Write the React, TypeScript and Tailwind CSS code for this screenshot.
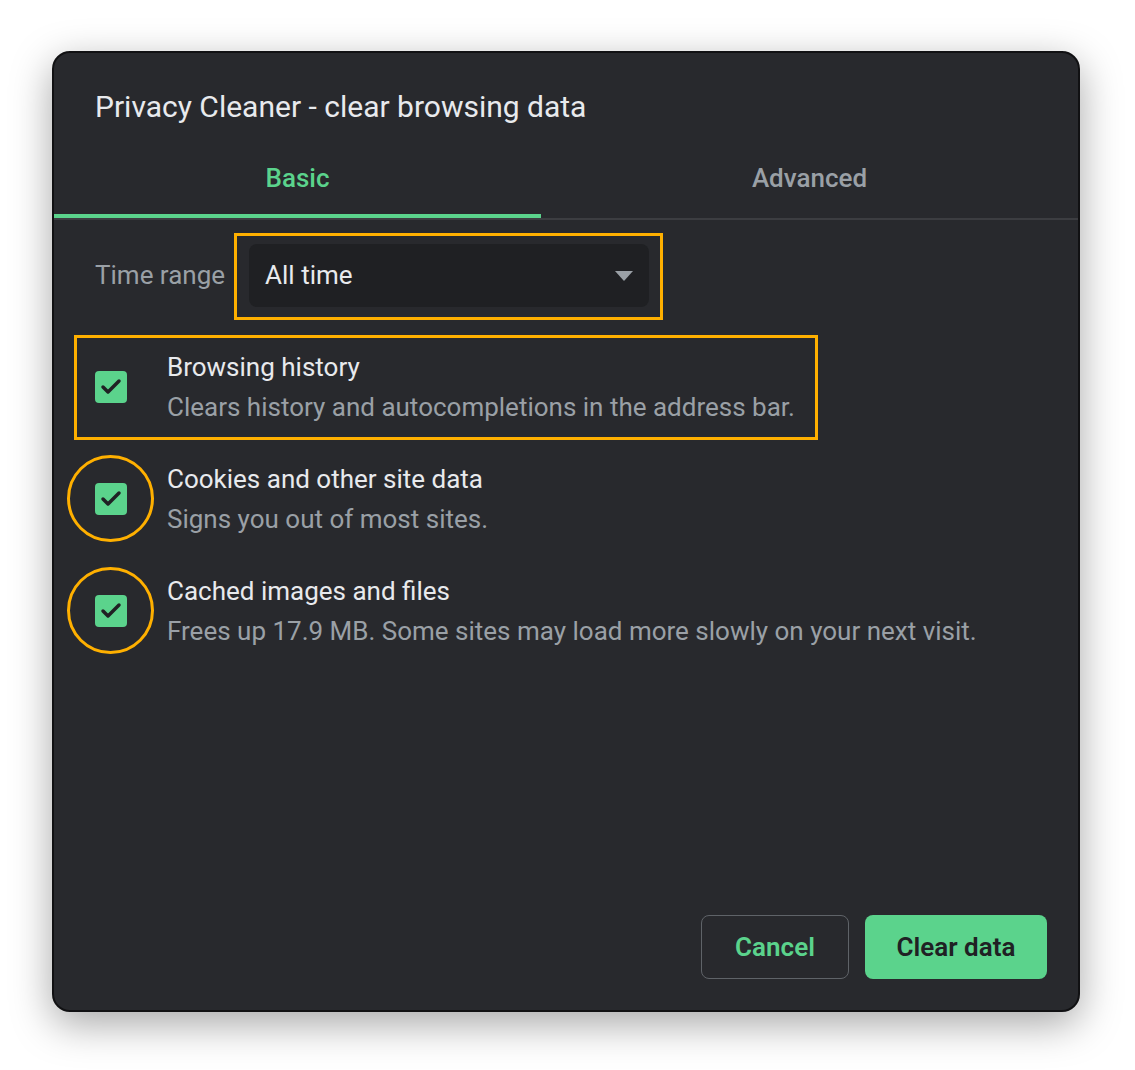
import { Check } from 'lucide-react';

const font = { fontFamily: 'Roboto, "Noto Sans", sans-serif' };

const CheckBox = ({ ring }: { ring?: boolean }) => (
  <div className="relative h-8 w-8 shrink-0">
    <div className="flex h-8 w-8 items-center justify-center rounded-[4px] bg-[#5bd38c]">
      <Check size={24} strokeWidth={3.5} color="#202124" />
    </div>
    {ring && (
      <div className="absolute -left-[28px] -top-[28px] h-[87px] w-[87px] rounded-full border-[3px] border-[#ffb000]" />
    )}
  </div>
);

const Row = ({ title, desc, ring }: { title: string; desc: string; ring?: boolean }) => (
  <div className="flex items-center gap-10">
    <CheckBox ring={ring} />
    <div className="flex flex-col text-[26px] leading-[40px]">
      <span className="text-[#e8eaed]">{title}</span>
      <span className="text-[#9aa0a6]">{desc}</span>
    </div>
  </div>
);

export default function App() {
  return (
    <div className="h-[1070px] w-[1135px] bg-white pl-[52px] pt-[51px]" style={font}>
      <div className="flex h-[961px] w-[1028px] flex-col rounded-[18px] border-2 border-[#111113] bg-[#28292d] shadow-[0_12px_40px_rgba(0,0,0,0.35)]">
        <h1 className="pl-[41px] pt-[36px] text-[30px] font-normal leading-[36px] text-[#e8eaed]">
          Privacy Cleaner - clear browsing data
        </h1>

        <div className="flex border-b-2 border-[#3c3d41]">
          <div className="w-[487px] border-b-4 border-[#5bd38c] pb-[21px] pt-[38px] text-center text-[26px] font-medium leading-[30px] text-[#5bd38c]">
            Basic
          </div>
          <div className="flex-1 pb-[21px] pt-[38px] text-center text-[26px] font-medium leading-[30px] text-[#9aa0a6]">
            Advanced
          </div>
        </div>

        <div className="flex flex-1 flex-col pl-[41px] pr-[31px] pb-[31px]">
          <div className="mt-6 flex items-center gap-6">
            <span className="text-[26px] text-[#9aa0a6]">Time range</span>
            <div className="relative">
              <div className="flex h-[63px] w-[400px] items-center justify-between rounded-[8px] bg-[#1f2023] pl-4 pr-4">
                <span className="text-[26px] text-[#e8eaed]">All time</span>
                <svg width="18" height="10" viewBox="0 0 18 10">
                  <path d="M0 0 L18 0 L9 10 Z" fill="#9aa0a6" />
                </svg>
              </div>
              <div className="absolute -bottom-[13px] -left-[15px] -right-[14px] -top-[11px] border-[3px] border-[#ffb000]" />
            </div>
          </div>

          <div className="mt-10 flex flex-col gap-8">
            <div className="relative">
              <Row
                title="Browsing history"
                desc="Clears history and autocompletions in the address bar."
              />
              <div className="absolute -left-[21px] -top-[12px] h-[105px] w-[744px] border-[3px] border-[#ffb000]" />
            </div>
            <Row title="Cookies and other site data" desc="Signs you out of most sites." ring />
            <Row
              title="Cached images and files"
              desc="Frees up 17.9 MB. Some sites may load more slowly on your next visit."
              ring
            />
          </div>

          <div className="mt-auto flex justify-end gap-4">
            <button className="h-16 w-[148px] rounded-[8px] border border-[#5f6368] text-[26px] font-semibold text-[#5bd38c]">
              Cancel
            </button>
            <button className="h-16 w-[182px] rounded-[8px] bg-[#5bd38c] text-[26px] font-semibold text-[#202124]">
              Clear data
            </button>
          </div>
        </div>
      </div>
    </div>
  );
}
